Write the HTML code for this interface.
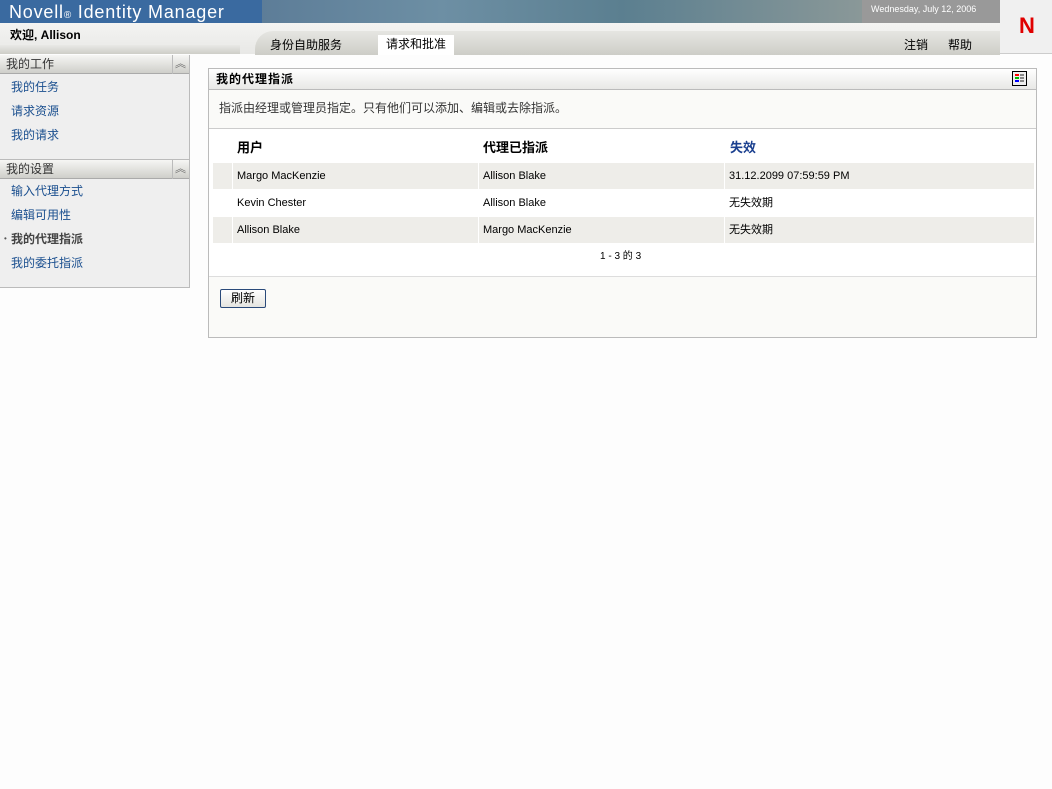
<!DOCTYPE html>
<html><head><meta charset="utf-8"><style>
*{margin:0;padding:0;box-sizing:border-box}
body{width:1052px;height:789px;background:#fdfdfd;font-family:"Liberation Sans","Noto Sans CJK SC",sans-serif;font-size:12px;color:#000;position:relative;overflow:hidden}
.a{position:absolute;white-space:nowrap;line-height:14px}
.lnk{color:#1a4f8f}
</style></head><body>
<div class="a" style="left:0;top:0;width:262px;height:23px;background:#3a6aa0"></div>
<div class="a" style="left:262px;top:0;width:600px;height:23px;background:linear-gradient(90deg,#5d7d98,#6d8fa4 30%,#5b7f90 60%,#8a9898)"></div>
<div class="a" style="left:862px;top:0;width:138px;height:23px;background:#999"></div>
<div class="a" style="left:9px;top:2px;font-size:18px;line-height:20px;color:#fff;letter-spacing:0.8px">Novell<span style="font-size:10px">®</span> Identity Manager</div>
<div class="a" style="left:871px;top:2px;font-size:9px;color:#fff">Wednesday, July 12, 2006</div>
<div class="a" style="left:1000px;top:0;width:52px;height:54px;background:#f0f0f0;border-bottom:1px solid #ccc"></div>
<div class="a" style="left:1019px;top:14px;font-size:22px;line-height:24px;font-weight:bold;color:#e00000">N</div>
<div class="a" style="left:0;top:23px;width:1000px;height:31px;background:linear-gradient(#f4f4f2,#e8e8e6)"></div>
<div class="a" style="left:255px;top:31px;width:745px;height:24px;background:linear-gradient(#e6e6e2,#cdcdc7);border-radius:18px 0 0 0"></div>
<div class="a" style="left:0;top:45px;width:240px;height:9px;background:linear-gradient(#e8e8e6,#cdcdc7)"></div>
<div class="a" style="left:10px;top:28px;font-weight:bold">欢迎, Allison</div>
<div class="a" style="left:270px;top:38px">身份自助服务</div>
<div class="a" style="left:378px;top:35px;width:76px;height:20px;background:#fff"></div>
<div class="a" style="left:386px;top:37px">请求和批准</div>
<div class="a" style="left:904px;top:38px">注销</div>
<div class="a" style="left:948px;top:38px">帮助</div>
<!-- sidebar -->
<div class="a" style="left:0;top:55px;width:190px;height:233px;background:#efefef;border-right:1px solid #bbb;border-bottom:1px solid #bbb"></div>
<div class="a" style="left:0;top:55px;width:189px;height:19px;background:linear-gradient(#f6f6f4,#cfcfca);border-bottom:1px solid #aaa"></div>
<div class="a" style="left:6px;top:57px;color:#333">我的工作</div>
<div class="a" style="left:172px;top:55px;width:1px;height:19px;background:#bbb"></div>
<div class="a" style="left:175px;top:57px;color:#666;font-size:11px">︽</div>
<div class="a lnk" style="left:11px;top:80px">我的任务</div>
<div class="a lnk" style="left:11px;top:104px">请求资源</div>
<div class="a lnk" style="left:11px;top:128px">我的请求</div>
<div class="a" style="left:0;top:159px;width:189px;height:1px;background:#bbb"></div>
<div class="a" style="left:0;top:160px;width:189px;height:19px;background:linear-gradient(#f6f6f4,#cfcfca);border-bottom:1px solid #aaa"></div>
<div class="a" style="left:6px;top:162px;color:#333">我的设置</div>
<div class="a" style="left:172px;top:160px;width:1px;height:19px;background:#bbb"></div>
<div class="a" style="left:175px;top:162px;color:#666;font-size:11px">︽</div>
<div class="a lnk" style="left:11px;top:184px">输入代理方式</div>
<div class="a lnk" style="left:11px;top:208px">编辑可用性</div>
<div class="a" style="left:4px;top:232px;font-size:8px;color:#555">•</div>
<div class="a" style="left:11px;top:232px;font-weight:bold;color:#444">我的代理指派</div>
<div class="a lnk" style="left:11px;top:256px">我的委托指派</div>
<!-- panel -->
<div class="a" style="left:208px;top:68px;width:829px;height:270px;border:1px solid #bbb;background:#fafaf8"></div>
<div class="a" style="left:209px;top:69px;width:827px;height:21px;background:linear-gradient(#fff,#e8e8e6);border-bottom:1px solid #bbb"></div>
<div class="a" style="left:216px;top:72px;font-weight:bold;letter-spacing:1px">我的代理指派</div>
<div class="a" style="left:1012px;top:71px;width:15px;height:15px;border:1px solid #000;background:#eee"></div>
<div class="a" style="left:1015px;top:74px;width:4px;height:2px;background:red;box-shadow:0 3px 0 #0b0,0 6px 0 #00f,5px 0 0 #888,5px 3px 0 #888,5px 6px 0 #888"></div>
<div class="a" style="left:219px;top:101px;color:#333">指派由经理或管理员指定。只有他们可以添加、编辑或去除指派。</div>
<div class="a" style="left:209px;top:128px;width:827px;height:149px;background:#fff;border-top:1px solid #ccc;border-bottom:1px solid #ddd"></div>
<div class="a" style="left:237px;top:141px;font-weight:bold;font-size:13px">用户</div>
<div class="a" style="left:483px;top:141px;font-weight:bold;font-size:13px">代理已指派</div>
<div class="a" style="left:730px;top:141px;font-weight:bold;font-size:13px;color:#1a3f8f">失效</div>
<div class="a" style="left:213px;top:163px;width:821px;height:26px;background:#eeede9"></div>
<div class="a" style="left:213px;top:217px;width:821px;height:26px;background:#eeede9"></div>
<div class="a" style="left:232px;top:163px;width:1px;height:26px;background:#fff"></div>
<div class="a" style="left:232px;top:217px;width:1px;height:26px;background:#fff"></div>
<div class="a" style="left:478px;top:163px;width:1px;height:80px;background:#fff"></div>
<div class="a" style="left:724px;top:163px;width:1px;height:80px;background:#fff"></div>
<div class="a" style="left:237px;top:169px;font-size:11px">Margo MacKenzie</div>
<div class="a" style="left:483px;top:169px;font-size:11px">Allison Blake</div>
<div class="a" style="left:729px;top:169px;font-size:11px">31.12.2099 07:59:59 PM</div>
<div class="a" style="left:237px;top:196px;font-size:11px">Kevin Chester</div>
<div class="a" style="left:483px;top:196px;font-size:11px">Allison Blake</div>
<div class="a" style="left:729px;top:196px;font-size:11px">无失效期</div>
<div class="a" style="left:237px;top:223px;font-size:11px">Allison Blake</div>
<div class="a" style="left:483px;top:223px;font-size:11px">Margo MacKenzie</div>
<div class="a" style="left:729px;top:223px;font-size:11px">无失效期</div>
<div class="a" style="left:600px;top:250px;font-size:10px">1 - 3 的 3</div>
<div class="a" style="left:220px;top:289px;width:46px;height:19px;border:1px solid #2a4a7a;border-radius:2px;background:linear-gradient(#fff,#e4e4e0);text-align:center;font-size:12px;line-height:17px">刷新</div>
</body></html>
